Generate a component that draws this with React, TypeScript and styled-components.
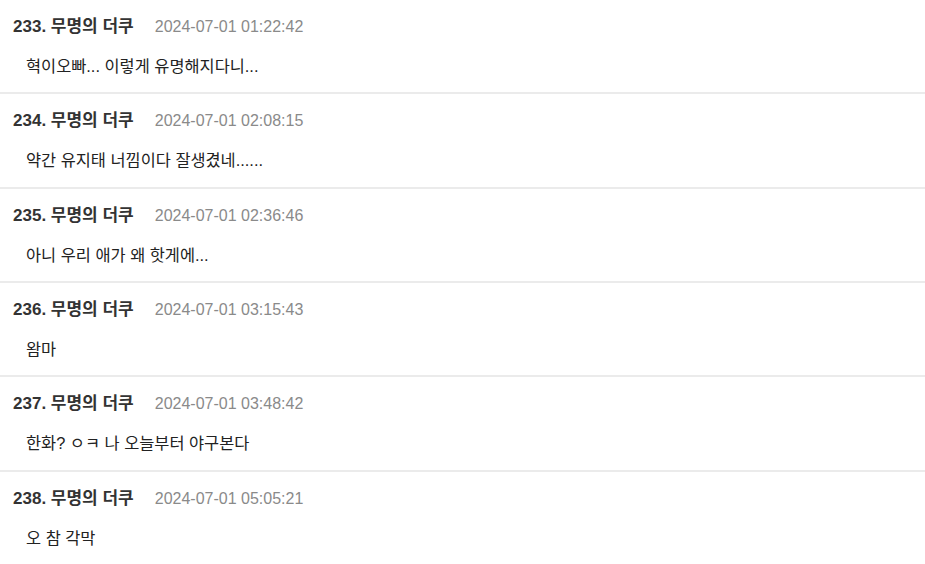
import styled, { createGlobalStyle } from "styled-components";

const GlobalStyle = createGlobalStyle`
  html, body {
    margin: 0;
    padding: 0;
    background: #fff;
  }
  body {
    font-family: "Liberation Sans", "Noto Sans CJK KR", sans-serif;
  }
`;

const comments = [
  { no: 233, author: "무명의 더쿠", date: "2024-07-01 01:22:42", text: "혁이오빠... 이렇게 유명해지다니..." },
  { no: 234, author: "무명의 더쿠", date: "2024-07-01 02:08:15", text: "약간 유지태 너낌이다 잘생겼네......" },
  { no: 235, author: "무명의 더쿠", date: "2024-07-01 02:36:46", text: "아니 우리 애가 왜 핫게에..." },
  { no: 236, author: "무명의 더쿠", date: "2024-07-01 03:15:43", text: "왐마" },
  { no: 237, author: "무명의 더쿠", date: "2024-07-01 03:48:42", text: "한화? ㅇㅋ 나 오늘부터 야구본다" },
  { no: 238, author: "무명의 더쿠", date: "2024-07-01 05:05:21", text: "오 참 각막" },
];

function App() {
  return (
    <>
      <GlobalStyle />
      <List>
        {comments.map((c) => (
          <Item key={c.no}>
            <Header>
              <Author>
                {c.no}. {c.author}
              </Author>
              <Date>{c.date}</Date>
            </Header>
            <Body>{c.text}</Body>
          </Item>
        ))}
      </List>
    </>
  );
}

export default App;

const List = styled.div`
  display: flex;
  flex-direction: column;
`;

const Item = styled.div`
  box-sizing: border-box;
  height: 94.33px;
  padding: 12px 13px 0;
  border-bottom: 2px solid #ebebeb;
`;

const Header = styled.div`
  display: flex;
  align-items: baseline;
  gap: 21px;
  height: 24px;
`;

const Author = styled.span`
  font-size: 17px;
  font-weight: 700;
  color: #333;
`;

const Date = styled.span`
  font-size: 16px;
  color: #8a8a8a;
`;

const Body = styled.div`
  margin-top: 17px;
  padding-left: 13px;
  font-size: 16.4px;
  color: #222;
`;
